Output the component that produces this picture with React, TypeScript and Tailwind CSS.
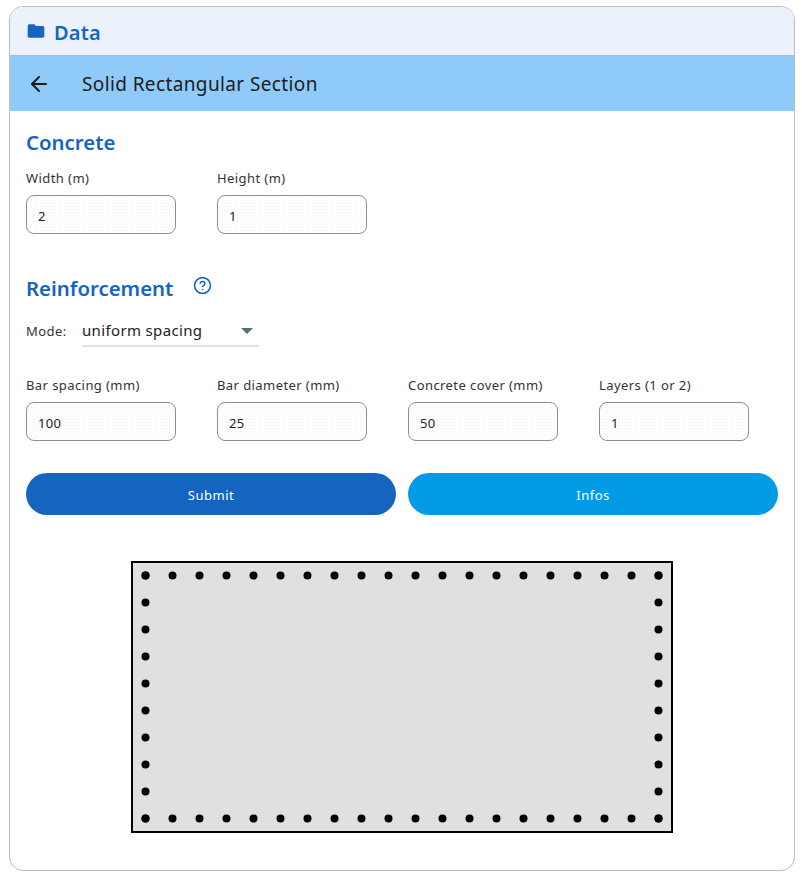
import { ArrowLeft, CircleHelp } from "lucide-react";

const FONT = "font-['Noto_Sans',sans-serif]";

function Field({ label, value }: { label: string; value: string }) {
  return (
    <div className="w-[150px]">
      <label className="block h-[17px] whitespace-nowrap text-[13px] leading-[17px] tracking-[0.42px] text-[#333]">
        {label}
      </label>
      <div className="mt-[8px] flex h-[39px] items-center rounded-[8px] border border-[#8e8e8e] bg-white bg-[radial-gradient(#eef1f7_1px,transparent_1px)] bg-[length:3px_3px] px-[11px] pt-[5px] text-[13px] tracking-[0.3px] text-[#222]">
        {value}
      </div>
    </div>
  );
}

function SectionDrawing() {
  const xs = Array.from({ length: 20 }, (_, i) => 14.5 + i * 27);
  const ys = Array.from({ length: 10 }, (_, i) => 14.5 + i * 27);
  return (
    <svg width="542" height="272" viewBox="0 0 542 272" className="block">
      <rect x="1" y="1" width="540" height="270" fill="#e0e0e0" stroke="#000" strokeWidth="2" />
      {xs.map((x) => (
        <g key={x}>
          <circle cx={x} cy={14.5} r="4" />
          <circle cx={x} cy={257.5} r="4" />
        </g>
      ))}
      {ys.map((y) => (
        <g key={y}>
          <circle cx={14.5} cy={y} r="4" />
          <circle cx={527.5} cy={y} r="4" />
        </g>
      ))}
    </svg>
  );
}

export default function App() {
  return (
    <div className={`${FONT} min-h-[877px] bg-white pl-[9px] pr-[7px] pt-[6px]`}>
      <div className="h-[865px] overflow-hidden rounded-[14px] border border-[#bdbdbd] bg-white">
        <div className="flex h-[49px] items-center gap-[8px] border-b border-[#a9bdd0] bg-[#ebf2fb] pl-[16px] text-[#1565c0]">
          <svg width="20" height="20" viewBox="0 0 24 24" fill="currentColor">
            <path d="M10 4H4c-1.100 0-2 .9-2 2v12c0 1.100.9 2 2 2h16c1.100 0 2-.9 2-2V8c0-1.100-.9-2-2-2h-8l-2-2z" />
          </svg>
          <span className="mt-[4px] text-[20px] font-semibold leading-none tracking-[0.2px]">Data</span>
        </div>
        <div className="flex h-[55px] items-center bg-[#90caf9] pl-[17px] text-[#1c1c1c]">
          <ArrowLeft size={24} strokeWidth={2} />
          <span className="ml-[31px] pt-[2px] text-[19px] tracking-[0.38px]">Solid Rectangular Section</span>
        </div>

        <div className="px-[16px]">
          <h2 className="mt-[15px] text-[20.4px] font-semibold leading-[32px] text-[#1565c0]">Concrete</h2>
          <div className="mt-[12px] flex gap-[41px]">
            <Field label="Width (m)" value="2" />
            <Field label="Height (m)" value="1" />
          </div>

          <div className="mt-[38px] flex items-center gap-[20px]">
            <h2 className="text-[20.4px] font-semibold leading-[32px] text-[#1565c0]">Reinforcement</h2>
            <CircleHelp size={19} strokeWidth={2} className="mb-[6px] text-[#1565c0]" />
          </div>
          <div className="mt-[12px] flex items-center">
            <span className="w-[56px] text-[13px] tracking-[0.42px] text-[#333]">Mode:</span>
            <div className="flex h-[31px] w-[177px] items-center justify-between border-b-2 border-[#e0e0e0] text-[15px] tracking-[0.35px] text-[#222]">
              uniform spacing
              <span className="mr-[6px] h-0 w-0 border-x-[6px] border-t-[6px] border-x-transparent border-t-[#546e7a]" />
            </div>
          </div>
          <div className="mt-[30px] flex gap-[41px]">
            <Field label="Bar spacing (mm)" value="100" />
            <Field label="Bar diameter (mm)" value="25" />
            <Field label="Concrete cover (mm)" value="50" />
            <Field label="Layers (1 or 2)" value="1" />
          </div>

          <div className="mt-[32px] flex gap-[12px]">
            <button className="h-[42px] flex-1 rounded-[21px] bg-[#1565c0] pt-[3px] text-[13px] tracking-[0.5px] text-white">Submit</button>
            <button className="h-[42px] flex-1 rounded-[21px] bg-[#039be5] pt-[3px] text-[13px] tracking-[0.5px] text-white">Infos</button>
          </div>

          <div className="mt-[46px] flex justify-center">
            <SectionDrawing />
          </div>
        </div>
      </div>
    </div>
  );
}
